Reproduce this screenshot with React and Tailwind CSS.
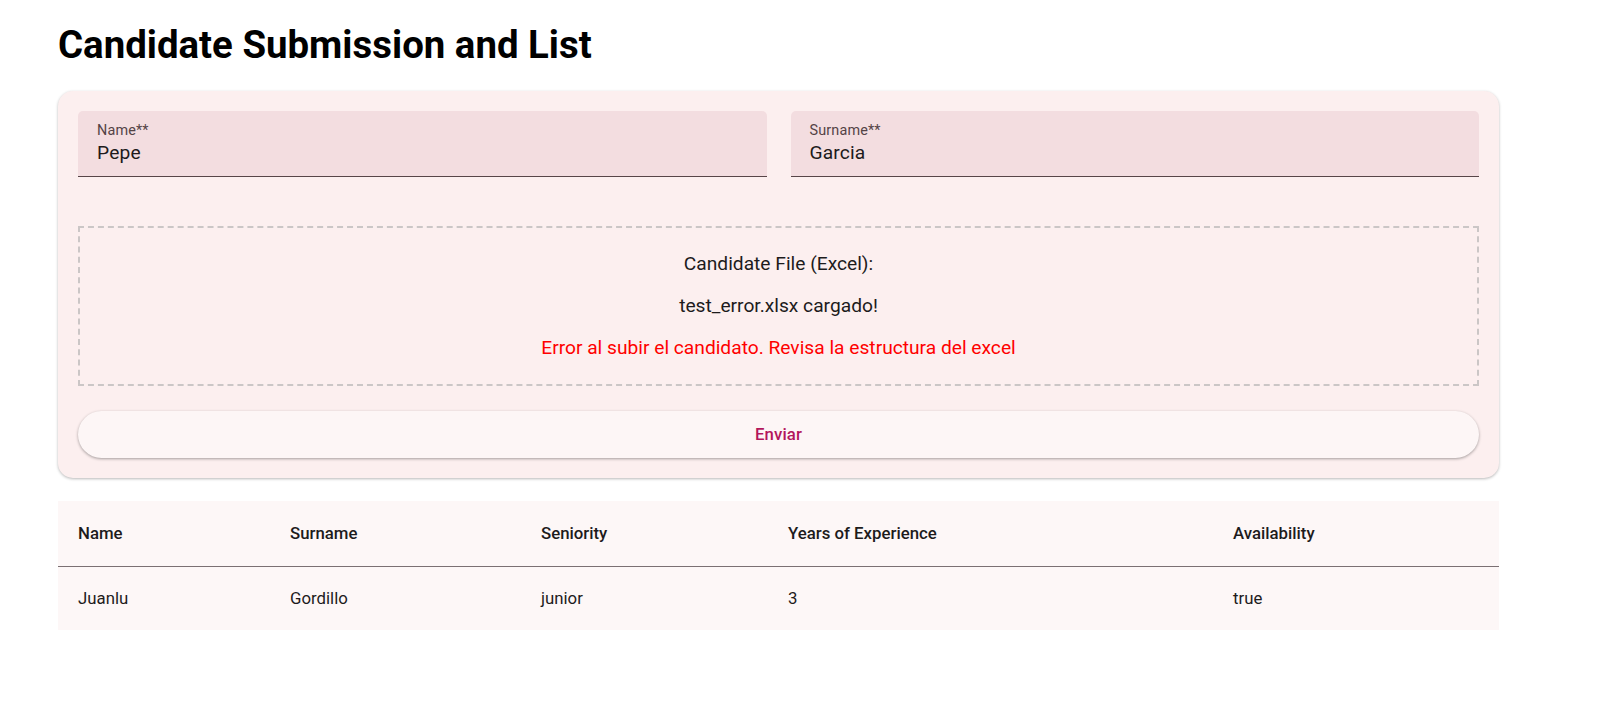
import React, { useState } from "react";

const rows = [
  {
    name: "Juanlu",
    surname: "Gordillo",
    seniority: "junior",
    years: 3,
    availability: "true",
  },
];

const Field = ({ label, value }) => {
  return (
    <div className="flex-1 h-[66px] bg-[#f3dde0] rounded-t-[5px] border-b border-[#574548] px-[19px] pt-[11px]">
      <div className="text-[14.4px] leading-[17px] tracking-[0.15px] text-[#534346]">
        {label}
      </div>
      <div className="text-[19.2px] leading-[24px] mt-[2px] tracking-[0.15px] text-[#201a1b]">
        {value}
      </div>
    </div>
  );
};

export default function App() {
  const [name] = useState("Pepe");
  const [surname] = useState("Garcia");

  return (
    <div
      className="min-h-screen bg-white pl-[58px] pt-[22px] text-[#1d1b1c]"
      style={{ fontFamily: "Roboto, 'Liberation Sans', sans-serif" }}
    >
      <div className="w-[1441px]">
        <h1 className="text-[38.4px] leading-[46px] font-bold text-black">
          Candidate Submission and List
        </h1>

        {/* Form */}
        <div className="mt-[23px] bg-[#fcefef] rounded-[15px] shadow-[0_1px_3px_rgba(0,0,0,0.28)] p-[20px]">
          <div className="flex gap-[24px]">
            <Field label="Name**" value={name} />
            <Field label="Surname**" value={surname} />
          </div>

          <div className="mt-[49px] border-2 border-dashed border-[#cbc6c6] pt-[23px] pb-[23px] flex flex-col items-center gap-[16px] text-[19.2px] leading-[26px]">
            <p className="text-[#1d1b1c]">Candidate File (Excel):</p>
            <p className="text-[#1d1b1c]">test_error.xlsx cargado!</p>
            <p className="text-[#ff0000]">
              Error al subir el candidato. Revisa la estructura del excel
            </p>
          </div>

          <button className="mt-[25px] w-full h-[47px] rounded-full bg-[#fdf6f6] shadow-[0_1px_3px_rgba(0,0,0,0.35)] text-[16.8px] font-medium text-[#b3165c] tracking-[0.1px]">
            Enviar
          </button>
        </div>

        {/* Table */}
        <div className="mt-[23px] bg-[#fdf7f7]">
          <table className="w-full table-fixed text-left">
            <thead>
              <tr className="border-b border-[#7b7073]">
                <th className="w-[232px] h-[65px] pl-[20px] text-[16.8px] font-medium">
                  Name
                </th>
                <th className="w-[251px] text-[16.8px] font-medium">
                  Surname
                </th>
                <th className="w-[247px] text-[16.8px] font-medium">
                  Seniority
                </th>
                <th className="w-[445px] text-[16.8px] font-medium">
                  Years of Experience
                </th>
                <th className="text-[16.8px] font-medium">Availability</th>
              </tr>
            </thead>
            <tbody>
              {rows.map((r, i) => (
                <tr key={i}>
                  <td className="h-[64px] pl-[20px] text-[16.8px]">{r.name}</td>
                  <td className="text-[16.8px]">{r.surname}</td>
                  <td className="text-[16.8px]">{r.seniority}</td>
                  <td className="text-[16.8px]">{r.years}</td>
                  <td className="text-[16.8px]">{r.availability}</td>
                </tr>
              ))}
            </tbody>
          </table>
        </div>
      </div>
    </div>
  );
}
